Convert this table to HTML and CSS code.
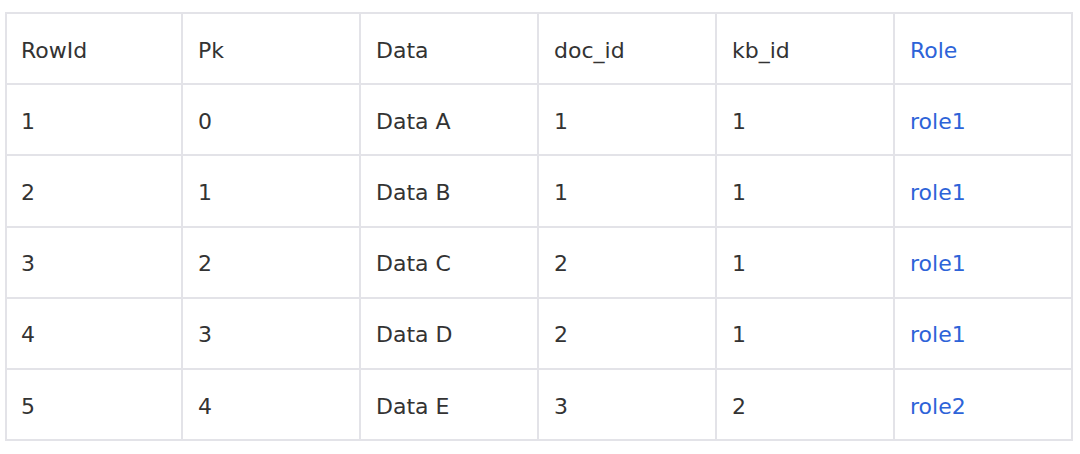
FILE: index.html
```html
<!DOCTYPE html>
<html>
<head>
<meta charset="utf-8">
<link rel="stylesheet" href="styles.css">
</head>
<body>
<table class="grid">
  <colgroup>
    <col class="first"><col><col><col><col><col>
  </colgroup>
  <thead>
    <tr><th>RowId</th><th>Pk</th><th>Data</th><th>doc_id</th><th>kb_id</th><th class="link">Role</th></tr>
  </thead>
  <tbody>
    <tr><td>1</td><td>0</td><td>Data A</td><td>1</td><td>1</td><td class="link">role1</td></tr>
    <tr><td>2</td><td>1</td><td>Data B</td><td>1</td><td>1</td><td class="link">role1</td></tr>
    <tr><td>3</td><td>2</td><td>Data C</td><td>2</td><td>1</td><td class="link">role1</td></tr>
    <tr><td>4</td><td>3</td><td>Data D</td><td>2</td><td>1</td><td class="link">role1</td></tr>
    <tr><td>5</td><td>4</td><td>Data E</td><td>3</td><td>2</td><td class="link">role2</td></tr>
  </tbody>
</table>
</body>
</html>
```
FILE: styles.css
```css
html, body {
  margin: 0;
  padding: 0;
  background: #ffffff;
}
body {
  padding: 12px 0 0 5px;
  font-family: "DejaVu Sans", "Noto Sans", sans-serif;
  color: #333333;
}
.grid {
  border-collapse: collapse;
  table-layout: fixed;
  width: 1068px;
}
.grid col {
  width: 178px;
}
.grid col.first {
  width: 176px;
}
.grid th, .grid td {
  border: 2px solid #e3e3e8;
  height: 66.2px;
  padding: 3px 0 0 15px;
  text-align: left;
  font-weight: 400;
  font-size: 22px;
  vertical-align: middle;
}
.grid th:first-child, .grid td:first-child {
  padding-left: 14px;
}
.grid .link {
  color: #2d63d8;
}
```
